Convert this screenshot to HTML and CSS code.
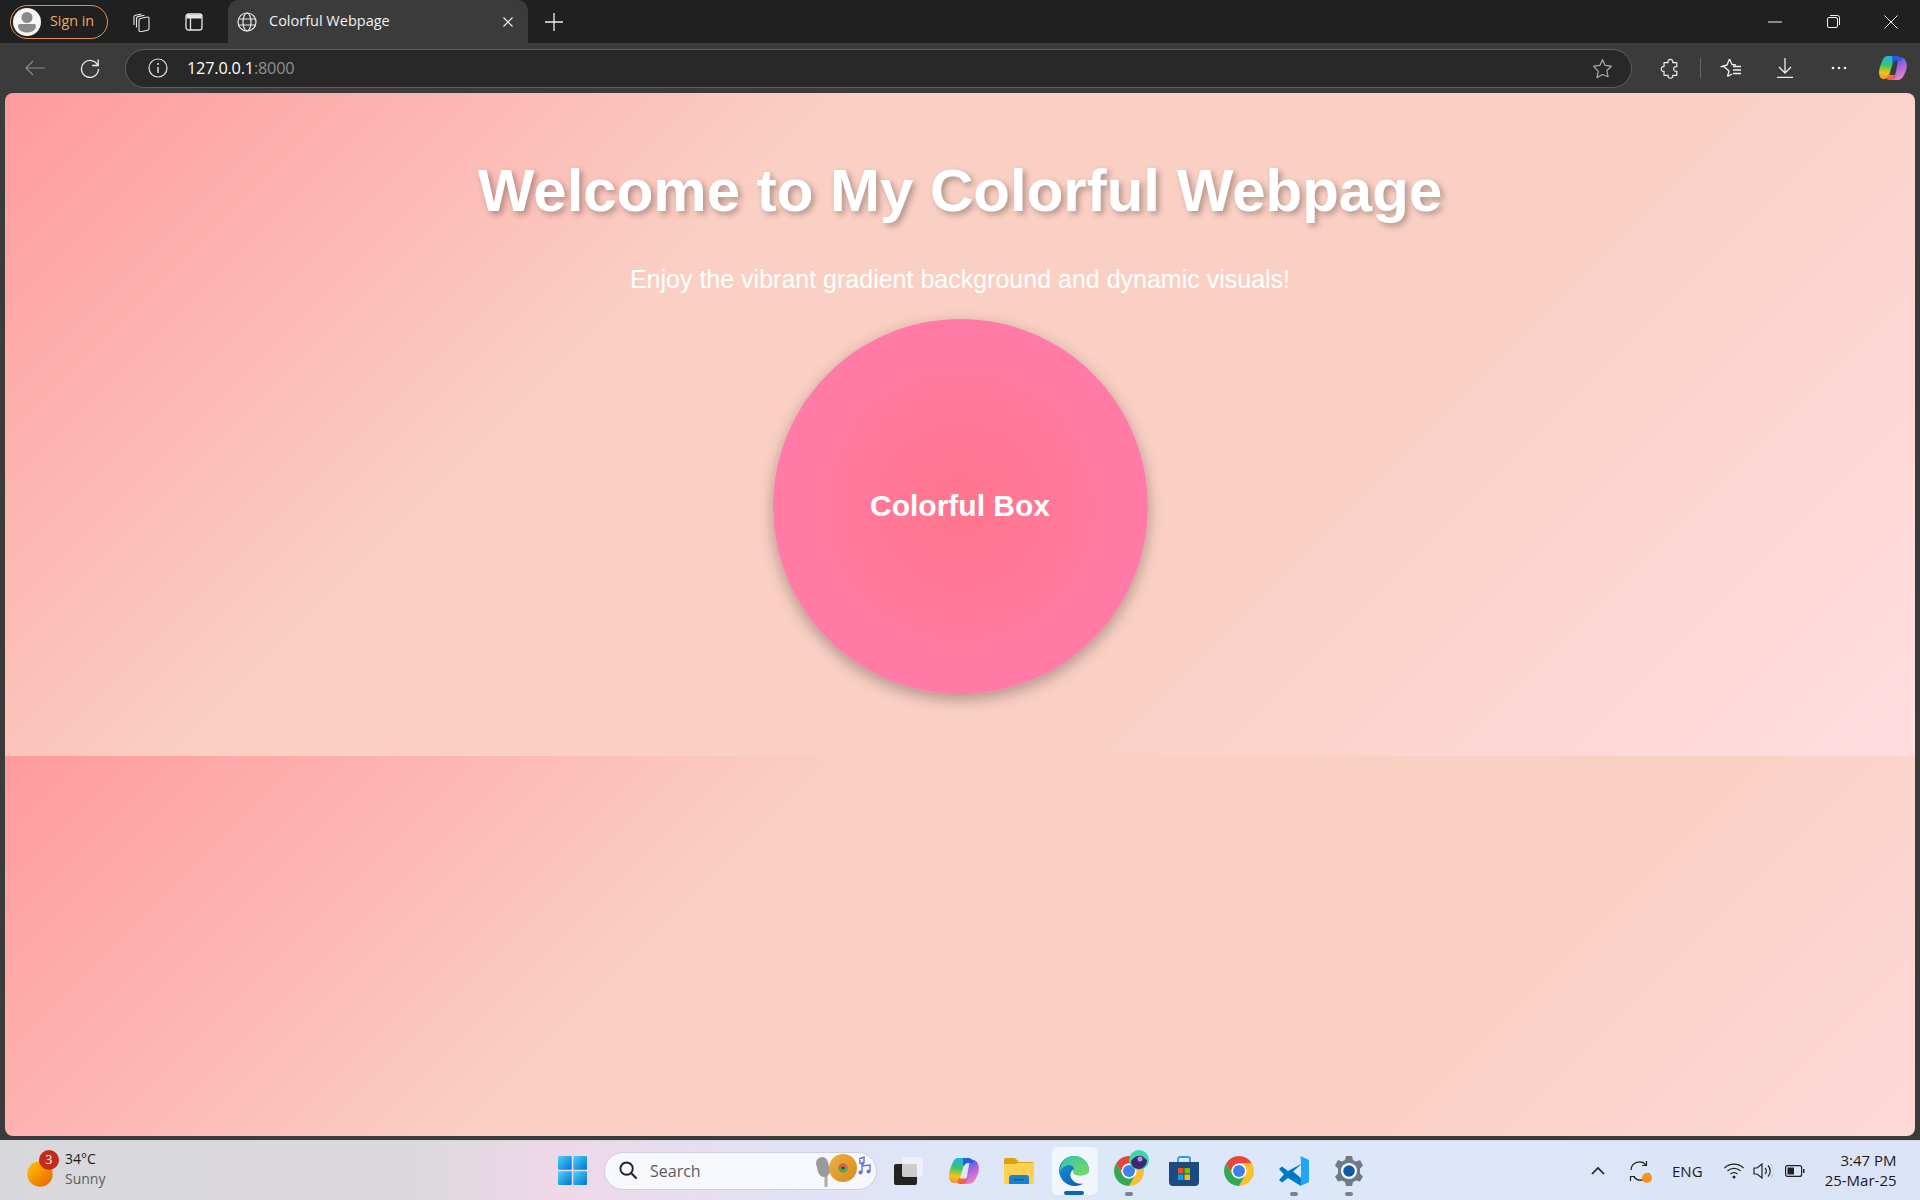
FILE: index.html
```html
<!DOCTYPE html>
<html lang="en">
<head>
<meta charset="utf-8">
<title>Colorful Webpage</title>
<link rel="stylesheet" href="styles.css">
</head>
<body>
<svg class="defs" width="0" height="0" aria-hidden="true">
  <defs>
    <linearGradient id="cop" x1="0.5" y1="0" x2="0.4" y2="1">
      <stop offset="0" stop-color="#1fb0f0"/><stop offset=".4" stop-color="#3cc46a"/><stop offset=".75" stop-color="#f5c518"/><stop offset="1" stop-color="#f0902a"/>
    </linearGradient>
    <linearGradient id="cop2" x1="0.3" y1="0" x2="0.7" y2="1">
      <stop offset="0" stop-color="#3a5ce8"/><stop offset=".45" stop-color="#a862e0"/><stop offset="1" stop-color="#f08ac0"/>
    </linearGradient>
    <linearGradient id="cop3" x1="0" y1="0" x2="1" y2="1">
      <stop offset="0" stop-color="#f58020"/><stop offset="1" stop-color="#e8486a"/>
    </linearGradient>
    <linearGradient id="win" x1="0" y1="0" x2="1" y2="1">
      <stop offset="0" stop-color="#4fd2fb"/><stop offset="1" stop-color="#0074d0"/>
    </linearGradient>
    <linearGradient id="edgeA" x1="0" y1="0" x2="1" y2="1">
      <stop offset="0" stop-color="#1a9be0"/><stop offset="1" stop-color="#0b4f9e"/>
    </linearGradient>
    <linearGradient id="edgeB" x1="0" y1="0" x2="1" y2="1">
      <stop offset="0" stop-color="#2fc4b8"/><stop offset="1" stop-color="#7fdc58"/>
    </linearGradient>
    <linearGradient id="sun" x1="0" y1="0" x2="1" y2="1">
      <stop offset="0" stop-color="#ffc800"/><stop offset="1" stop-color="#e85f00"/>
    </linearGradient>
    <linearGradient id="disc" x1="0" y1="0" x2="1" y2="1">
      <stop offset="0" stop-color="#eeb040"/><stop offset="1" stop-color="#d88a1c"/>
    </linearGradient>
    <symbol id="chrome" viewBox="0 0 40 40">
      <g transform="translate(-4 -4)">
        <path fill="#e8453c" d="M6.700 14A20 20 0 0 1 41.300 14H24A10 10 0 0 0 15.340 29Z"/>
        <path fill="#fbc02d" d="M41.300 14A20 20 0 0 1 24 44L32.660 29A10 10 0 0 0 24 14Z"/>
        <path fill="#34a853" d="M24 44A20 20 0 0 1 6.700 14L15.340 29A10 10 0 0 0 32.660 29Z"/>
        <circle cx="24" cy="24" r="10" fill="#fff"/>
        <circle cx="24" cy="24" r="8" fill="#3f80ea"/>
      </g>
    </symbol>
    <symbol id="copilot" viewBox="0 0 30 28">
      <path fill="url(#cop2)" d="M21 3c4-1 7 1 8 4 1.500 4 1 8-1 12-2 5-4 8-9 8H11c4-1 6-4 7-8l3-16Z"/>
      <path fill="url(#cop)" d="M9 1h11c-3 1-4 3-5 7l-4 13c-1 3-3 5-6 5-3 0-5-3-5-7 0-5 2-10 4-14 1-2.500 3-4 5-4Z"/>
      <path fill="#1f5fe0" d="M14 1h5c3 0 5 2 6 5h-6c-2 0-3 1-4 3l-1-1c.5-3 0-6 0-7Z"/>
      <path fill="url(#cop3)" d="M10 21c1 0 2 .5 3 .5h6c-1 3-3 5.500-7.500 5.500-2 0-3.500-1-3.500-2Z"/>
    </symbol>
  </defs>
</svg>

<header class="titlebar">
  <div class="signin">
    <span class="avatar">
      <svg viewBox="0 0 28 28" class="i-avatar"><circle cx="14" cy="9.500" r="5.500" fill="#8a8a8a"/><path fill="#8a8a8a" d="M5 18c0-1.500 1-2 2.500-2h13c1.500 0 2.500.5 2.500 2 0 4-4 6.500-9 6.500S5 22 5 18Z"/></svg>
    </span>
    <span class="signin-text">Sign in</span>
  </div>
  <span class="slot s54">
    <svg class="ico" viewBox="0 0 20 20" width="20" height="20"><g fill="none" stroke="#e6e6e6" stroke-width="1.100"><path d="M8 8.300c0-1 .6-1.600 1.500-1.800l6.700-1.500c1-.2 1.800.4 1.800 1.400v10c0 1-.6 1.600-1.500 1.800l-6.700 1.500c-1 .2-1.800-.4-1.800-1.400Z"/><path d="M5.500 15.500V6.500c0-1 .6-1.700 1.500-1.900l6.500-1.400"/><path d="M3 13V5c0-1 .6-1.600 1.500-1.800L10.500 2"/></g></svg>
  </span>
  <span class="slot s52">
    <svg class="ico" viewBox="0 0 18 18" width="18" height="18"><rect x="1" y="1" width="16" height="16" rx="2.500" fill="none" stroke="#e6e6e6" stroke-width="1.300"/><path fill="#e6e6e6" d="M1.500 1.500h15v4h-15z"/><path stroke="#e6e6e6" stroke-width="1.300" d="M5.500 5v12"/></svg>
  </span>
  <div class="tab">
    <svg class="globe" viewBox="0 0 20 20" width="20" height="20"><g fill="none" stroke="#e8e8e8" stroke-width="1.200"><circle cx="10" cy="10" r="9"/><ellipse cx="10" cy="10" rx="4" ry="9"/><path d="M1.800 7h16.400M1.800 13h16.400"/></g></svg>
    <span class="tab-title">Colorful Webpage</span>
    <svg class="tab-close" viewBox="0 0 12 12" width="12" height="12"><path d="M1.500 1.500l9 9M10.500 1.500l-9 9" stroke="#f0f0f0" stroke-width="1.200"/></svg>
  </div>
  <span class="slot s52">
    <svg class="ico" viewBox="0 0 18 18" width="18" height="18"><path d="M9 0v18M0 9h18" stroke="#f0f0f0" stroke-width="1.300"/></svg>
  </span>
  <div class="spacer"></div>
  <span class="slot s58"><svg viewBox="0 0 14 2" width="14" height="2"><path d="M0 1h14" stroke="#f0f0f0" stroke-width="1"/></svg></span>
  <span class="slot s58"><svg viewBox="0 0 13 13" width="13" height="13"><g fill="none" stroke="#f0f0f0" stroke-width="1"><rect x=".5" y="2.500" width="10" height="10" rx="1.500"/><path d="M3 .5h7.500a2 2 0 0 1 2 2V10"/></g></svg></span>
  <span class="slot s58"><svg viewBox="0 0 14 14" width="14" height="14"><path d="M.5.5l13 13M13.500.5l-13 13" stroke="#f0f0f0" stroke-width="1"/></svg></span>
</header>

<nav class="toolbar">
  <span class="slot s55">
    <svg viewBox="0 0 20 16" width="20" height="16"><path d="M20 8H1M8 1L1 8l7 7" fill="none" stroke="#8c8c8c" stroke-width="1.200"/></svg>
  </span>
  <span class="slot s55">
    <svg viewBox="0 0 20 20" width="20" height="20"><path d="M17.800 7.500A8.500 8.500 0 1 0 18.500 11" fill="none" stroke="#efefef" stroke-width="1.300"/><path d="M18.200 1.500v6h-6" fill="none" stroke="#efefef" stroke-width="1.300"/></svg>
  </span>
  <div class="urlbar">
    <svg class="info" viewBox="0 0 20 20" width="20" height="20"><circle cx="10" cy="10" r="9" fill="none" stroke="#e6e6e6" stroke-width="1.200"/><path d="M10 9v6" stroke="#e6e6e6" stroke-width="1.400"/><circle cx="10" cy="6" r="1" fill="#e6e6e6"/></svg>
    <span class="url"><span class="url-host">127.0.0.1</span><span class="url-port">:8000</span></span>
    <svg class="url-star" viewBox="0 0 22 22" width="21" height="21"><path d="M11 1.800l2.800 6 6.500.8-4.800 4.500 1.300 6.500L11 17.300l-5.800 3.300 1.300-6.500L1.700 8.600l6.500-.8Z" fill="none" stroke="#a8a8a8" stroke-width="1.300" stroke-linejoin="round"/></svg>
  </div>
  <span class="slot s54 ml10">
    <svg viewBox="-1 -1 20 23" width="19" height="21"><path fill="none" stroke="#efefef" stroke-width="1.300" stroke-linejoin="round" d="M3 4h4.500c-.8-2 .8-3.500 2.500-3.500S13.300 2 12.500 4H17v4.500c-2-.5-3.500.8-3.500 2.500s1.500 3 3.500 2.500V18h-4.500c.8 2-.8 3-2.500 3s-3.300-1-2.500-3H3v-4.500c-2 .5-3-.8-3-2.500s1-3 3-2.500Z"/></svg>
  </span>
  <span class="vsep"></span>
  <span class="slot s54">
    <svg viewBox="0 0 22 22" width="22" height="22"><path d="M9.500 2l2.500 5.500 4 .5M7.500 19.500L9 14 4 9.500l-3 .1 6-1.600L9.500 2M7.500 19.500L12 17" fill="none" stroke="#efefef" stroke-width="1.300" stroke-linejoin="round"/><path d="M13 9.500h8M13 13h8M13 16.500h8" stroke="#efefef" stroke-width="1.300"/></svg>
  </span>
  <span class="slot s54">
    <svg viewBox="0 0 16 20" width="16" height="20"><path d="M8 0v15M2 9l6 6 6-6M0 19.300h16" fill="none" stroke="#efefef" stroke-width="1.300"/></svg>
  </span>
  <span class="slot s54">
    <svg viewBox="0 0 16 4" width="16" height="4"><circle cx="2" cy="2" r="1.300" fill="#efefef"/><circle cx="8" cy="2" r="1.300" fill="#efefef"/><circle cx="14" cy="2" r="1.300" fill="#efefef"/></svg>
  </span>
  <span class="slot s54"><svg width="28" height="26"><use href="#copilot"/></svg></span>
</nav>

<main class="viewport">
  <h1 class="headline">Welcome to My Colorful Webpage</h1>
  <p class="lead">Enjoy the vibrant gradient background and dynamic visuals!</p>
  <div class="circle">Colorful Box</div>
</main>

<footer class="taskbar">
  <div class="weather">
    <span class="weather-icon">
      <svg viewBox="0 0 26 26" width="26" height="26"><circle cx="13" cy="13" r="12.700" fill="url(#sun)"/></svg>
      <span class="badge">3</span>
    </span>
    <span class="weather-text"><span class="temp">34°C</span><span class="cond">Sunny</span></span>
  </div>
  <div class="center">
    <span class="startslot">
      <svg viewBox="0 0 30 30" width="29" height="29"><g fill="url(#win)"><rect width="14.200" height="14.200" rx="1"/><rect x="15.800" width="14.200" height="14.200" rx="1"/><rect y="15.800" width="14.200" height="14.200" rx="1"/><rect x="15.800" y="15.800" width="14.200" height="14.200" rx="1"/></g></svg>
    </span>
    <div class="search">
      <svg viewBox="0 0 20 20" width="19" height="19"><circle cx="8" cy="8" r="6.500" fill="none" stroke="#222" stroke-width="2"/><path d="M13 13l5.500 5.500" stroke="#222" stroke-width="2.200"/></svg>
      <span class="search-text">Search</span>
      <svg class="search-art" viewBox="0 0 56 36" width="56" height="36">
        <path d="M10 22v12" stroke="#aaa" stroke-width="3"/>
        <rect x="1" y="4" width="12" height="20" rx="6" fill="#9a9a9a" transform="rotate(-14 7 14)"/>
        <circle cx="27" cy="15" r="14" fill="url(#disc)"/>
        <circle cx="27" cy="15" r="4.500" fill="#49a860"/>
        <path d="M22.500 15a4.500 4.500 0 0 1 9 0Z" fill="#e0584c"/>
        <circle cx="27" cy="15" r="1.300" fill="#333"/>
        <g fill="none" stroke="#6d74d2" stroke-width="1.500"><path d="M43 6l5-2v6M44 11v-4"/><path d="M46 19v-6l8-1v6"/></g>
        <g fill="#6d74d2"><circle cx="44.500" cy="19.500" r="2"/><circle cx="52.500" cy="18.500" r="2"/><circle cx="46.500" cy="10.500" r="1.700"/></g>
      </svg>
    </div>
    <span class="app task">
      <svg viewBox="0 0 29 28" width="29" height="28"><rect y="7" width="23" height="21" rx="2" fill="#222"/><rect x="8" width="21" height="20" rx="2" fill="#f2f2f5" opacity=".82"/></svg>
    </span>
    <span class="app"><svg width="30" height="28"><use href="#copilot"/></svg></span>
    <span class="app">
      <svg viewBox="0 0 30 26" width="30" height="26"><path fill="#d9a30f" d="M0 2a2 2 0 0 1 2-2h9l4 4h13a2 2 0 0 1 2 2v6H0Z"/><path fill="#fcd053" d="M0 6h11l3-1h16v19a2 2 0 0 1-2 2H2a2 2 0 0 1-2-2Z"/><path fill="#1a82d0" d="M5 26v-6a3 3 0 0 1 3-3h14a3 3 0 0 1 3 3v6Z"/><path fill="#0d5fa8" d="M10 21h10v1.500H10z"/></svg>
    </span>
    <span class="app active">
      <svg viewBox="0 0 30 30" width="30" height="30"><path fill="url(#edgeA)" d="M15 0C7 0 .5 6 0 14c0 9 7 16 16 16 3 0 6-1 8.500-2.500-5 1-9-1-10.500-3C10 21 11 15 15 13c-1 1-1 3 0 4 2 2 10 2 14 0 .7-1 1-2 1-3C30 6 23 0 15 0Z"/><path fill="url(#edgeB)" d="M15 0c8 0 15 6 15 14 0 2-1 4-4 5-3 1-9 1-11-1-1-1-1-3 0-4.500C15 9 9 8 4.500 11 3 12 1.500 14 1 16 1 7 7 0 15 0Z"/></svg>
      <span class="indicator"></span>
    </span>
    <span class="app">
      <svg width="30" height="30"><use href="#chrome"/></svg>
      <svg class="profile" viewBox="0 0 20 20" width="20" height="20"><circle cx="10" cy="10" r="10" fill="#3ed6a8"/><path fill="#3a2a70" d="M2 11c3-3 5-6 11-5l5 4c0 5-4 9-8 9-5 0-8-3-8-8Z"/><circle cx="11" cy="9" r="2.500" fill="#b98ee8"/></svg>
      <span class="dot"></span>
    </span>
    <span class="app">
      <svg viewBox="0 0 30 30" width="30" height="30"><path d="M9 6V3a2 2 0 0 1 2-2h8a2 2 0 0 1 2 2v3" fill="none" stroke="#2ba0e0" stroke-width="1.800"/><path fill="#1c4a80" d="M0 6h30v20a4 4 0 0 1-4 4H4a4 4 0 0 1-4-4Z"/><rect x="9" y="12" width="5.500" height="5.500" fill="#f25022"/><rect x="15.500" y="12" width="5.500" height="5.500" fill="#7fba00"/><rect x="9" y="18.500" width="5.500" height="5.500" fill="#00a4ef"/><rect x="15.500" y="18.500" width="5.500" height="5.500" fill="#ffb900"/></svg>
    </span>
    <span class="app"><svg width="30" height="30"><use href="#chrome"/></svg></span>
    <span class="app">
      <svg viewBox="0 0 30 30" width="30" height="30"><path fill="#0078c4" d="M22 0v8L9 15 3 10.500 0 13l5 5.500L0 24l3 2.500L9 22l13 8 0-8-8-6.500 8-7Z"/><path fill="#22a6f0" d="M21.500 0L30 4v22l-8.500 4 .5-8V8Z"/></svg>
      <span class="dot"></span>
    </span>
    <span class="app">
      <svg viewBox="0 0 30 30" width="30" height="30"><path fill="#6e7a86" d="M12 0h6l1 4 3 1.500 4-1.500 3 5.500-3 3v5l3 3-3 5-4-1L19 26l-1 4h-6l-1-4-3-1.500-4 1-3-5 3-3v-5l-3-3L4 4l4 1.500L11 4Z"/><circle cx="15" cy="15" r="8" fill="#fff"/><circle cx="15" cy="15" r="5.800" fill="#0f5aa8"/></svg>
      <span class="dot"></span>
    </span>
  </div>
  <div class="tray">
    <svg class="t-chev" viewBox="0 0 14 9" width="14" height="9"><path d="M1 8l6-6 6 6" fill="none" stroke="#222" stroke-width="1.700"/></svg>
    <span class="t-sync">
      <svg viewBox="0 0 22 22" width="22" height="22"><g fill="none" stroke="#222" stroke-width="1.200"><path d="M2 10a8.500 8.500 0 0 1 15-5"/><path d="M17.500 1v4.500H13"/><path d="M20 13a8.500 8.500 0 0 1-15 4"/><path d="M1.500 21v-4.500H6"/></g></svg>
      <span class="sync-dot"></span>
    </span>
    <span class="t-eng">ENG</span>
    <svg class="t-wifi" viewBox="0 0 20 16" width="20" height="16"><g fill="none" stroke="#222" stroke-width="1.200"><path d="M.5 5a13.500 13.500 0 0 1 19 0"/><path d="M3.500 8a9.500 9.500 0 0 1 13 0"/><path d="M6.500 11a5 5 0 0 1 7 0"/></g><circle cx="10" cy="14" r="1.500" fill="#222"/></svg>
    <svg class="t-vol" viewBox="0 0 20 16" width="20" height="16"><path d="M1 5h3l5-4v14l-5-4H1Z" fill="none" stroke="#222" stroke-width="1.200"/><path d="M12 5a4 4 0 0 1 0 6" fill="none" stroke="#222" stroke-width="1.200"/><path d="M15 2.500a8 8 0 0 1 0 11" fill="none" stroke="#222" stroke-width="1.200"/><path d="M18 1a11 11 0 0 1 0 14" fill="none" stroke="#bbb" stroke-width="1"/></svg>
    <svg class="t-batt" viewBox="0 0 20 12" width="20" height="12"><rect x=".6" y=".6" width="16" height="10.800" rx="2" fill="none" stroke="#222" stroke-width="1.200"/><rect x="2.500" y="2.500" width="6.500" height="7" fill="#222"/><path d="M18 4h1.500v4H18z" fill="#222"/></svg>
    <span class="clock"><span>3:47 PM</span><span>25-Mar-25</span></span>
  </div>
</footer>
</body>
</html>
```
FILE: styles.css
```css
* { box-sizing: border-box; }
html, body { margin: 0; height: 100%; }
body {
  width: 1920px;
  height: 1200px;
  display: flex;
  flex-direction: column;
  background: #3b3b3b;
  overflow: hidden;
  font-family: "Open Sans", "Noto Sans", sans-serif;
}
.defs { position: absolute; }

/* title bar */
.titlebar {
  height: 43px;
  flex: none;
  display: flex;
  align-items: center;
  background: #202020;
}
.slot { display: flex; align-items: center; justify-content: center; flex: none; height: 100%; }
.s52 { width: 52px; }
.s54 { width: 54px; }
.s55 { width: 55px; }
.s58 { width: 58px; }
.ml10 { margin-left: 10px; }
.spacer { flex: 1; }
.signin {
  margin-left: 10px;
  width: 98px;
  height: 34px;
  flex: none;
  display: flex;
  align-items: center;
  gap: 9px;
  padding-left: 2px;
  border: 1px solid #e0914a;
  border-radius: 17px;
  margin-right: 6px;
}
.avatar { width: 28px; height: 28px; border-radius: 50%; background: #f5f5f5; display: flex; }
.i-avatar { width: 28px; height: 28px; }
.signin-text { color: #f0a664; font-size: 14.300px; margin-top: -2px; }
.tab {
  margin-left: 8px;
  width: 300px;
  height: 43px;
  flex: none;
  display: flex;
  align-items: center;
  padding: 0 14px 0 9px;
  background: #3b3b3b;
  border-radius: 10px 10px 0 0;
  color: #f2f2f2;
  font-size: 14.500px;
}
.globe { flex: none; }
.tab-title { margin-left: 12px; margin-top: -2px; flex: 1; }
.tab-close { flex: none; margin-right: 0; }

/* toolbar */
.toolbar {
  height: 50px;
  flex: none;
  display: flex;
  align-items: center;
  padding-left: 7px;
  background: #3b3b3b;
}
.urlbar {
  margin-left: 8px;
  flex: 1;
  height: 39px;
  display: flex;
  align-items: center;
  padding: 0 3px 0 22px;
  background: #282828;
  border: 1.500px solid #5f5f5f;
  border-radius: 20px;
}
.info { flex: none; }
.url { margin-left: 19px; flex: 1; font-size: 16.300px; letter-spacing: -.2px; }
.url-host { color: #fff; }
.url-port { color: #8f8f8f; }
.url-star { flex: none; margin-right: 15px; }
.vsep { width: 1px; height: 20px; background: #666; margin: 0 3px 0 4px; flex: none; }

/* page */
.viewport {
  height: 1043px;
  flex: none;
  margin: 0 5px;
  border-radius: 8px;
  background: linear-gradient(135deg, #ff9a9e, #fad0c4, #fad0c4, #ffdde1) 0 0 / 100% 663px repeat;
  color: #fff;
  font-family: "Liberation Sans", Arial, sans-serif;
  text-align: center;
  overflow: hidden;
  padding-top: 63px;
}
.headline {
  margin: 0;
  font-size: 60px;
  font-weight: 700;
  text-shadow: 3px 3px 6px rgba(0, 0, 0, .3);
}
.lead { margin: 40px 0 0; font-size: 25px; }
.circle {
  width: 375px;
  height: 375px;
  margin: 25px auto 0;
  padding-bottom: 2px;
  display: flex;
  align-items: center;
  justify-content: center;
  border-radius: 50%;
  background: radial-gradient(circle, #ff758c, #ff7eb3);
  box-shadow: 0 5px 15px rgba(0, 0, 0, .3);
  font-size: 30px;
  font-weight: 700;
}

/* task bar */
.taskbar {
  margin-top: 4px;
  height: 60px;
  flex: none;
  display: flex;
  align-items: center;
  background: linear-gradient(90deg, #d8d8dc 0, #dcd9dd 22%, #efd8e8 29%, #e0e3f5 42%, #dbe8f8 60%, #dde6f8 80%, #dbe3f6 100%);
  border-top: 1px solid #cfd4de;
  color: #1b1b1b;
}
.weather { width: 558px; flex: none; display: flex; align-items: center; padding-left: 27px; }
.weather-icon { position: relative; display: flex; width: 26px; height: 26px; margin-top: 6px; }
.badge {
  position: absolute;
  top: -11px;
  left: 12px;
  width: 20px;
  height: 20px;
  border-radius: 50%;
  background: #c42b1c;
  color: #fff;
  font-size: 12px;
  line-height: 20px;
  text-align: center;
}
.weather-text { margin: 0 0 3px 12px; display: flex; flex-direction: column; font-size: 14px; line-height: 20px; }
.cond { color: #5c5c5c; }
.center { display: flex; align-items: center; flex: none; height: 100%; }
.startslot { display: flex; width: 46px; flex: none; }
.search {
  width: 273px;
  height: 38px;
  flex: none;
  display: flex;
  align-items: center;
  padding: 0 4px 0 14px;
  background: #f6f8fe;
  border: 1px solid #cdd0e0;
  border-radius: 19px;
  color: #5a5a5a;
  font-size: 16px;
}
.search-text { margin-left: 12px; flex: 1; }
.search-art { flex: none; }
.app {
  position: relative;
  width: 44px;
  height: 48px;
  margin-right: 11px;
  flex: none;
  display: flex;
  align-items: center;
  justify-content: center;
  border-radius: 5px;
}
.task { margin-left: 9px; margin-right: 12px; }
.active { background: #f1f6fc; box-shadow: 3px 0 0 -1px #edf3fb; }
.indicator {
  position: absolute;
  left: 12px;
  bottom: 0;
  width: 20px;
  height: 3.500px;
  border-radius: 2px;
  background: #0067c0;
}
.dot {
  position: absolute;
  left: 14px;
  bottom: -1px;
  width: 8px;
  height: 3.500px;
  margin-left: 4px;
  border-radius: 2px;
  background: #7e8186;
}
.profile { position: absolute; top: 3px; left: 22px; }
.tray { flex: 1; height: 100%; display: flex; align-items: center; font-size: 15px; }
.t-chev { margin-left: 209px; flex: none; }
.t-sync { position: relative; display: flex; margin-left: 24px; flex: none; }
.sync-dot {
  position: absolute;
  right: -1px;
  bottom: -1px;
  width: 10px;
  height: 10px;
  border-radius: 50%;
  background: #f7941d;
}
.t-eng { margin-left: 21px; flex: none; }
.t-wifi { margin-left: 21px; flex: none; }
.t-vol { margin-left: 9px; flex: none; }
.t-batt { margin-left: 12px; flex: none; }
.clock {
  margin: 0 0 2px 17px;
  display: flex;
  flex-direction: column;
  align-items: flex-end;
  line-height: 20px;
  width: 75px;
  white-space: nowrap;
}
```
